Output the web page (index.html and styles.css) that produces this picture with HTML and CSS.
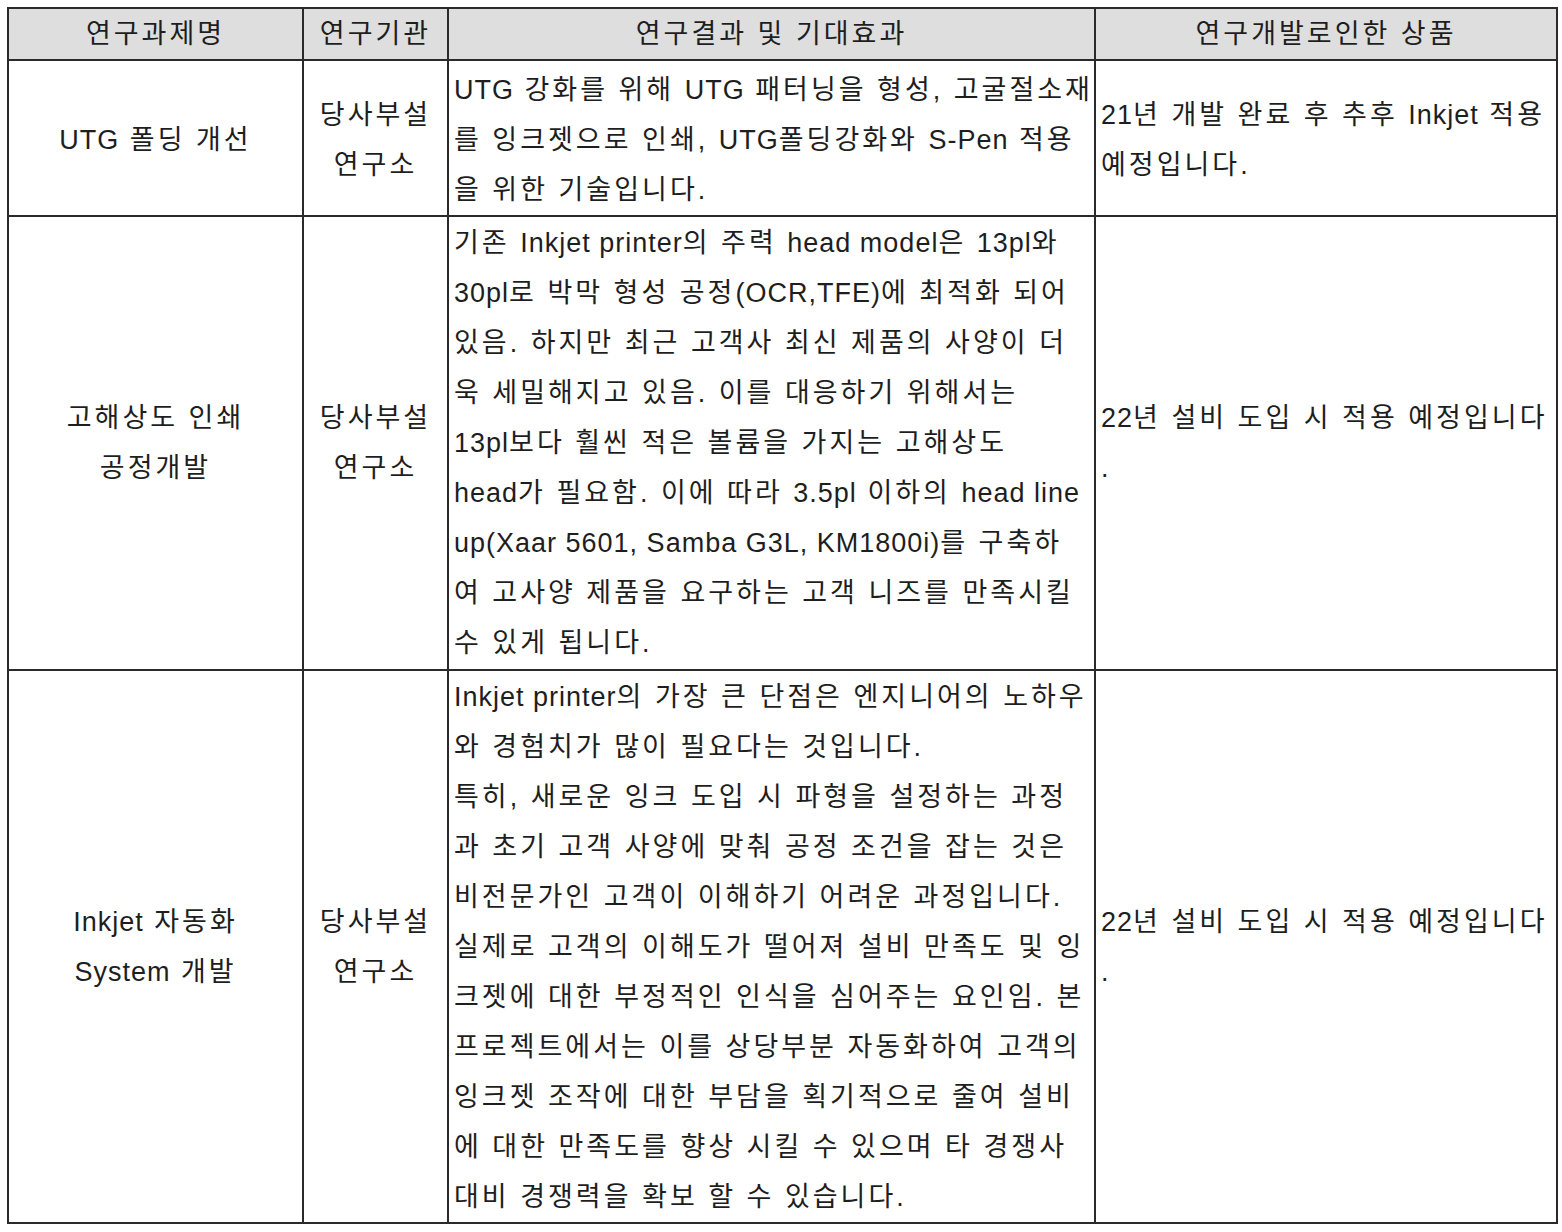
FILE: index.html
```html
<!DOCTYPE html>
<html lang="ko">
<head>
<meta charset="utf-8">
<link rel="stylesheet" href="styles.css">
</head>
<body>
<table class="grid">
  <colgroup>
    <col class="c1"><col class="c2"><col class="c3"><col class="c4">
  </colgroup>
  <thead>
    <tr class="head">
      <th>연구과제명</th>
      <th>연구기관</th>
      <th>연구결과 및 기대효과</th>
      <th>연구개발로인한 상품</th>
    </tr>
  </thead>
  <tbody>
    <tr class="r1">
      <td class="center"><span class="l">UTG</span> 폴딩 개선</td>
      <td class="center">당사부설<br>연구소</td>
      <td class="left"><span class="l">UTG</span> 강화를 위해 <span class="l">UTG</span> 패터닝을 형성, 고굴절소재<br>를 잉크젯으로 인쇄, <span class="l">UTG</span>폴딩강화와 <span class="l">S-Pen</span> 적용<br>을 위한 기술입니다.</td>
      <td class="left"><span class="l">21</span>년 개발 완료 후 추후 <span class="l">Inkjet</span> 적용<br>예정입니다.</td>
    </tr>
    <tr class="r2">
      <td class="center">고해상도 인쇄<br>공정개발</td>
      <td class="center">당사부설<br>연구소</td>
      <td class="left">기존 <span class="l">Inkjet printer</span>의 주력 <span class="l">head model</span>은 <span class="l">13pl</span>와<br><span class="l">30pl</span>로 박막 형성 공정<span class="l">(OCR,TFE)</span>에 최적화 되어<br>있음. 하지만 최근 고객사 최신 제품의 사양이 더<br>욱 세밀해지고 있음. 이를 대응하기 위해서는<br><span class="l">13pl</span>보다 훨씬 적은 볼륨을 가지는 고해상도<br><span class="l">head</span>가 필요함. 이에 따라 <span class="l">3.5pl</span> 이하의 <span class="l">head line</span><br><span class="l">up(Xaar 5601, Samba G3L, KM1800i)</span>를 구축하<br>여 고사양 제품을 요구하는 고객 니즈를 만족시킬<br>수 있게 됩니다.</td>
      <td class="left"><span class="l">22</span>년 설비 도입 시 적용 예정입니다<br>.</td>
    </tr>
    <tr class="r3">
      <td class="center"><span class="l">Inkjet</span> 자동화<br><span class="l">System</span> 개발</td>
      <td class="center">당사부설<br>연구소</td>
      <td class="left"><span class="l">Inkjet printer</span>의 가장 큰 단점은 엔지니어의 노하우<br>와 경험치가 많이 필요다는 것입니다.<br>특히, 새로운 잉크 도입 시 파형을 설정하는 과정<br>과 초기 고객 사양에 맞춰 공정 조건을 잡는 것은<br>비전문가인 고객이 이해하기 어려운 과정입니다.<br>실제로 고객의 이해도가 떨어져 설비 만족도 및 잉<br>크젯에 대한 부정적인 인식을 심어주는 요인임. 본<br>프로젝트에서는 이를 상당부분 자동화하여 고객의<br>잉크젯 조작에 대한 부담을 획기적으로 줄여 설비<br>에 대한 만족도를 향상 시킬 수 있으며 타 경쟁사<br>대비 경쟁력을 확보 할 수 있습니다.</td>
      <td class="left"><span class="l">22</span>년 설비 도입 시 적용 예정입니다<br>.</td>
    </tr>
  </tbody>
</table>
</body>
</html>
```
FILE: styles.css
```css
html, body {
  margin: 0;
  padding: 0;
  background: #ffffff;
}
body {
  padding: 7px 0 0 7px;
  font-family: "Liberation Sans", "Noto Sans CJK KR", sans-serif;
  color: #1e1e1e;
}
.grid {
  border-collapse: collapse;
  table-layout: fixed;
  width: 1549px;
  border: 2px solid #3a3a3a;
  font-size: 27px;
  letter-spacing: 3px;
}
.c1 { width: 295px; }
.c2 { width: 145px; }
.c3 { width: 647px; }
.c4 { width: 462px; }
.grid th, .grid td {
  border: 2px solid #2a2a2a;
  padding: 0 5px;
  white-space: nowrap;
  vertical-align: middle;
  line-height: 50px;
  font-weight: normal;
  overflow: hidden;
}
.head th {
  background: #dedede;
  height: 50px;
  text-align: center;
}
.center { text-align: center; }
.left { text-align: left; }
.l {
  letter-spacing: 1px;
}
.r1 td {
  height: 151px;
  padding-top: 3px;
}
.r2 td { height: 452px; }
.r3 td { height: 551px; }
```
